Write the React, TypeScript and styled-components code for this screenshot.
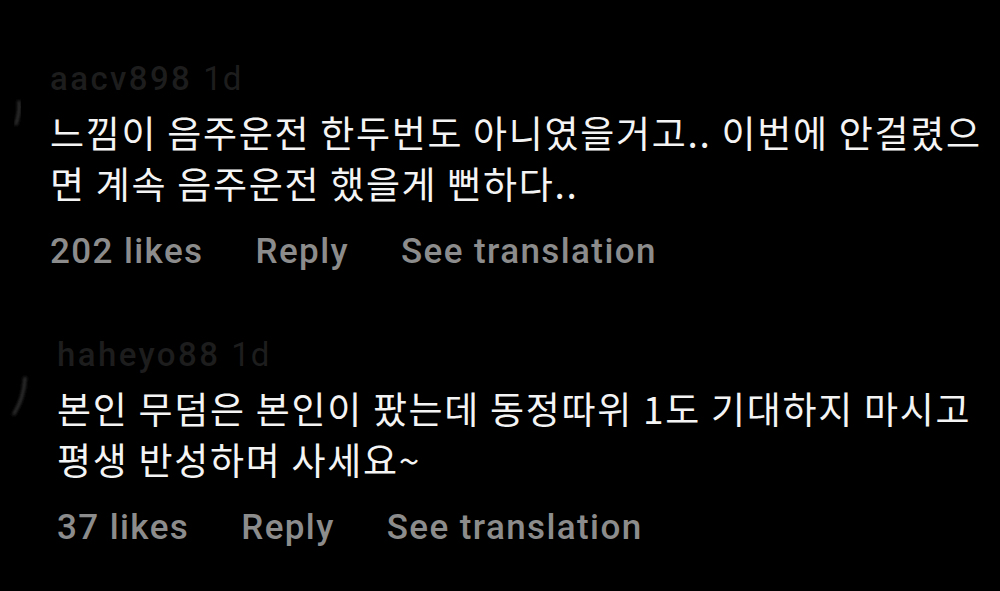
import React from "react";
import styled, { createGlobalStyle } from "styled-components";

const Global = createGlobalStyle`
  html, body { margin: 0; padding: 0; background: #000; }
  body { width: 1000px; height: 591px; overflow: hidden; }
`;

const Page = styled.div`
  width: 1000px;
  height: 591px;
  background: #000;
  box-sizing: border-box;
  padding-top: 58px;
  display: flex;
  flex-direction: column;
  gap: 63px;
`;

const Comment = styled.div<{ $side: number }>`
  display: grid;
  grid-template-columns: ${(p) => p.$side}px 1fr;
`;

const AvatarEdge = styled.div<{ $top: number }>`
  padding-top: ${(p) => p.$top}px;
  padding-left: 8px;
`;

const Body = styled.div`
  display: flex;
  flex-direction: column;
`;

const Header = styled.div`
  height: 40px;
  display: flex;
  align-items: center;
  gap: 11px;
  font-family: Roboto, "Liberation Sans", Arial, sans-serif;
  font-weight: 500;
  font-size: 33px;
  letter-spacing: 2.4px;
  color: #1d1d1d;
`;

const Time = styled.span`
  font-weight: 400;
  letter-spacing: 1px;
`;

const Text = styled.div`
  margin-top: 9px;
  font-family: "Noto Sans CJK KR", "Liberation Sans", sans-serif;
  font-size: 37px;
  letter-spacing: 1.7px;
  line-height: 51px;
  color: #f4f4f4;
  white-space: pre-line;
`;

const Actions = styled.div`
  margin-top: 22px;
  height: 40px;
  display: flex;
  align-items: center;
  gap: 52px;
  font-family: Roboto, "Liberation Sans", Arial, sans-serif;
  font-weight: 500;
  font-size: 35px;
  letter-spacing: 1.4px;
  color: #8c8c8c;
`;

const Mark = ({ d }: { d: string }) => (
  <svg width="30" height="50" viewBox="0 0 30 50">
    <defs>
      <filter id="b" x="-50%" y="-50%" width="200%" height="200%">
        <feGaussianBlur stdDeviation="1.4" />
      </filter>
    </defs>
    <path d={d} stroke="#343434" strokeWidth="3" fill="none" strokeLinecap="round" filter="url(#b)" />
  </svg>
);

type C = {
  user: string;
  time: string;
  text: string;
  likes: string;
  side: number;
  markTop: number;
  markD: string;
};

const data: C[] = [
  {
    user: "aacv898",
    time: "1d",
    text: "느낌이 음주운전 한두번도 아니였을거고.. 이번에 안걸렸으\n면 계속 음주운전 했을게 뻔하다..",
    likes: "202 likes",
    side: 50,
    markTop: 38,
    markD: "M11 6 Q12 16 8 28",
  },
  {
    user: "haheyo88",
    time: "1d",
    text: "본인 무덤은 본인이 팠는데 동정따위 1도 기대하지 마시고\n평생 반성하며 사세요~",
    likes: "37 likes",
    side: 57,
    markTop: 38,
    markD: "M17 6 Q16 26 6 42",
  },
];

export default function App() {
  return (
    <>
      <Global />
      <Page>
        {data.map((c) => (
          <Comment key={c.user} $side={c.side}>
            <AvatarEdge $top={c.markTop}>
              <Mark d={c.markD} />
            </AvatarEdge>
            <Body>
              <Header>
                <span>{c.user}</span>
                <Time>{c.time}</Time>
              </Header>
              <Text>{c.text}</Text>
              <Actions>
                <span>{c.likes}</span>
                <span>Reply</span>
                <span>See translation</span>
              </Actions>
            </Body>
          </Comment>
        ))}
      </Page>
    </>
  );
}
